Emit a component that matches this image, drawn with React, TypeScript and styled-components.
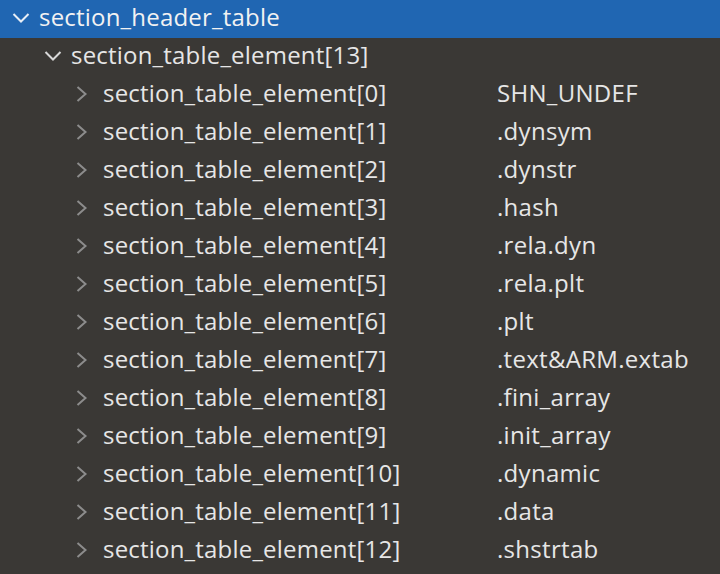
import React from "react";
import styled, { createGlobalStyle } from "styled-components";

const Global = createGlobalStyle`
  html, body { margin: 0; padding: 0; background: #3a3835; }
  body { font-family: "Open Sans", "Noto Sans", sans-serif; }
`;

const Tree = styled.div`
  width: 720px;
  height: 574px;
  overflow: hidden;
  background: #3a3835;
  color: #e8e8e8;
  font-family: "Open Sans", "Noto Sans", sans-serif;
  font-size: 24px;
`;

const Row = styled.div<{ $level: number; $selected?: boolean }>`
  display: grid;
  grid-template-columns: ${(p) => 32 * p.$level}px 39px 394px 1fr;
  align-items: center;
  height: 38px;
  background: ${(p) => (p.$selected ? "#2066b2" : "transparent")};
  color: ${(p) => (p.$selected ? "#f2f2f2" : "#e6e6e6")};
`;

const Twisty = styled.span`
  display: flex;
  align-items: center;
  justify-content: flex-start;
  padding-left: 12px;
  padding-bottom: 2px;
`;

const Label = styled.span<{ $wide?: boolean }>`
  white-space: nowrap;
  letter-spacing: 0.2px;
  line-height: 30px;
  padding-bottom: 4px;
  grid-column: ${(p) => (p.$wide ? "3 / 5" : "auto")};
`;

const Value = styled.span`
  white-space: nowrap;
  letter-spacing: 0.3px;
  line-height: 30px;
  padding-bottom: 4px;
`;

const Chevron = ({ open, color }: { open: boolean; color: string }) =>
  open ? (
    <svg width="18" height="12" viewBox="0 0 18 12">
      <path d="M1.5 2 L9 9.5 L16.5 2" stroke={color} strokeWidth="2" fill="none" />
    </svg>
  ) : (
    <svg width="12" height="16" viewBox="0 0 12 16">
      <path d="M1.5 1 L9.5 8 L1.5 15" stroke={color} strokeWidth="2" fill="none" />
    </svg>
  );

const items = [
  "SHN_UNDEF",
  ".dynsym",
  ".dynstr",
  ".hash",
  ".rela.dyn",
  ".rela.plt",
  ".plt",
  ".text&ARM.extab",
  ".fini_array",
  ".init_array",
  ".dynamic",
  ".data",
  ".shstrtab",
];

export default function App() {
  return (
    <Tree>
      <Global />
      <Row $level={0} $selected>
        <span />
        <Twisty>
          <Chevron open color="#e8eef6" />
        </Twisty>
        <Label $wide>section_header_table</Label>
      </Row>
      <Row $level={1}>
        <span />
        <Twisty>
          <Chevron open color="#d8d8d8" />
        </Twisty>
        <Label $wide>section_table_element[13]</Label>
      </Row>
      {items.map((v, i) => (
        <Row $level={2} key={i}>
          <span />
          <Twisty>
            <Chevron open={false} color="#8c8c8c" />
          </Twisty>
          <Label>section_table_element[{i}]</Label>
          <Value>{v}</Value>
        </Row>
      ))}
    </Tree>
  );
}
